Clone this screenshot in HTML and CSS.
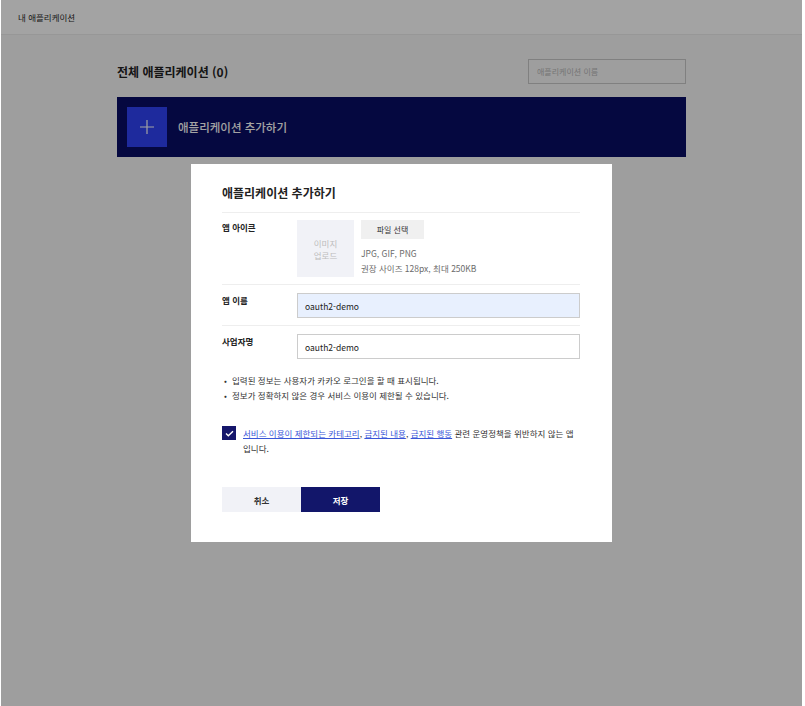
FILE: index.html
```html
<!DOCTYPE html>
<html lang="ko">
<head>
  <meta charset="UTF-8">
  <title>내 애플리케이션</title>
  <link rel="stylesheet" href="styles.css">
</head>
<body>

<div class="page">
  <div class="topbar">내 애플리케이션</div>

  <div class="content">
    <div class="list-head">
      <h2>전체 애플리케이션 (0)</h2>
      <input class="search" type="text" placeholder="애플리케이션 이름">
    </div>

    <div class="add-panel">
      <span class="plus-box">
        <svg width="16" height="16" viewBox="0 0 16 16"><path d="M8 1v14M1 8h14" stroke="#fff" stroke-width="1.2"/></svg>
      </span>
      <span>애플리케이션 추가하기</span>
    </div>
  </div>
</div>

<div class="backdrop">
  <div class="modal">
    <h3>애플리케이션 추가하기</h3>

    <div class="row icon-row">
      <div class="label">앱 아이콘</div>
      <div class="icon-field">
        <div class="icon-box">이미지<br>업로드</div>
        <div class="icon-info">
          <button class="file-btn">파일 선택</button>
          <p>JPG, GIF, PNG</p>
          <p>권장 사이즈 128px, 최대 250KB</p>
        </div>
      </div>
    </div>

    <div class="row">
      <div class="label">앱 이름</div>
      <input class="field autofill" type="text" value="oauth2-demo">
    </div>

    <div class="row">
      <div class="label">사업자명</div>
      <input class="field" type="text" value="oauth2-demo">
    </div>

    <ul class="notes">
      <li>입력된 정보는 사용자가 카카오 로그인을 할 때 표시됩니다.</li>
      <li>정보가 정확하지 않은 경우 서비스 이용이 제한될 수 있습니다.</li>
    </ul>

    <label class="agree">
      <span class="check">
        <svg width="9" height="7" viewBox="0 0 9 7"><path d="M1 3.6l2.3 2.2L8 1.2" fill="none" stroke="#fff" stroke-width="1.4"/></svg>
      </span>
      <span><a href="#">서비스 이용이 제한되는 카테고리</a>, <a href="#">금지된 내용</a>, <a href="#">금지된 행동</a> 관련 운영정책을 위반하지 않는 앱 입니다.</span>
    </label>

    <div class="buttons">
      <button class="btn-cancel">취소</button>
      <button class="btn-save">저장</button>
    </div>
  </div>
</div>

</body>
</html>
```

FILE: styles.css
```css
html, body {
  margin: 0;
  height: 100%;
}
body {
  font-family: "Noto Sans CJK KR", "Noto Sans", sans-serif;
  color: #222;
  background: #fff;
}
.page {
  min-height: 100%;
  margin: 0 3px 0 1px;
  background: #f7f7f7;
}
.topbar {
  height: 34px;
  line-height: 34px;
  padding-left: 17px;
  font-size: 8.5px;
  font-weight: 400;
  color: #2a2a2a;
  background: #fff;
  border-bottom: 1px solid #ececec;
}
.content {
  width: 569px;
  margin: 0 auto;
  padding-top: 24px;
}
.list-head {
  display: flex;
  justify-content: space-between;
  align-items: center;
}
.list-head h2 {
  margin: 0;
  font-size: 12px;
  font-weight: bold;
}
.search {
  width: 158px;
  height: 25px;
  box-sizing: border-box;
  border: 1px solid #c8c8c8;
  background: #f7f7f7;
  padding: 0 8px;
  font-family: inherit;
  font-size: 8px;
}
.search::placeholder {
  color: #b8b8b8;
}
.add-panel {
  margin-top: 13px;
  height: 60px;
  background: #080d64;
  display: flex;
  align-items: center;
  padding-left: 10px;
  gap: 11px;
  color: #fff;
  font-size: 11.5px;
  font-weight: 500;
}
.plus-box {
  width: 40px;
  height: 40px;
  background: #3043f6;
  display: flex;
  align-items: center;
  justify-content: center;
}

.backdrop {
  position: fixed;
  top: 0;
  bottom: 0;
  left: 1px;
  right: 3px;
  background: rgba(0, 0, 0, 0.36);
  display: flex;
  align-items: center;
  justify-content: center;
}
.modal {
  width: 421px;
  box-sizing: border-box;
  background: #fff;
  padding: 21px 32px 30px 31px;
}
.modal h3 {
  margin: 0 0 11px;
  font-size: 12px;
  line-height: 16px;
  font-weight: bold;
}
.row {
  display: flex;
  border-top: 1px solid #eee;
  padding: 8px 0 7px;
}
.row.icon-row {
  padding: 7px 0;
}
.row:last-of-type {
  border-bottom: 1px solid #eee;
  padding-bottom: 8px;
}
.label {
  width: 75px;
  flex-shrink: 0;
  font-size: 8.5px;
  font-weight: bold;
  line-height: 14px;
}
.icon-field {
  display: flex;
  gap: 7px;
}
.icon-box {
  width: 57px;
  height: 57px;
  background: #f1f2f7;
  color: #bdbdbd;
  font-size: 8.5px;
  line-height: 12px;
  display: flex;
  align-items: center;
  justify-content: center;
  text-align: center;
}
.icon-info {
  line-height: 0;
}
.file-btn {
  display: block;
  height: 19px;
  width: 63px;
  border: none;
  background: #f0f0f0;
  color: #333;
  font-family: inherit;
  font-size: 8px;
  padding: 0;
  margin-bottom: 7px;
}
.icon-info p {
  margin: 0;
  font-size: 8.5px;
  line-height: 15px;
  color: #6b6b6b;
}
.field {
  flex: 1;
  height: 25px;
  box-sizing: border-box;
  border: 1px solid #ccc;
  background: #fff;
  padding: 0 8px 0 7px;
  font-family: inherit;
  font-size: 8.5px;
  color: #222;
}
.field.autofill {
  background: #e8f0fe;
}
.notes {
  list-style: none;
  margin: 7px 0 0;
  padding: 0;
  font-size: 8.5px;
  line-height: 15px;
  color: #333;
}
.notes li::before {
  content: "•";
  display: inline-block;
  width: 10px;
  padding-left: 2px;
  box-sizing: border-box;
}
.agree {
  display: flex;
  gap: 7px;
  margin-top: 23px;
  font-size: 8.5px;
  line-height: 15px;
  color: #333;
}
.check {
  width: 14px;
  height: 14px;
  flex-shrink: 0;
  background: #15166b;
  display: flex;
  align-items: center;
  justify-content: center;
}
.agree a {
  color: #3a56d8;
}
.buttons {
  display: flex;
  margin-top: 31px;
}
.buttons button {
  width: 79px;
  height: 25px;
  border: none;
  font-family: inherit;
  font-size: 8.5px;
  font-weight: bold;
  padding: 0;
}
.btn-cancel {
  background: #f1f2f7;
  color: #333;
}
.btn-save {
  background: #12166a;
  color: #fff;
}
```
